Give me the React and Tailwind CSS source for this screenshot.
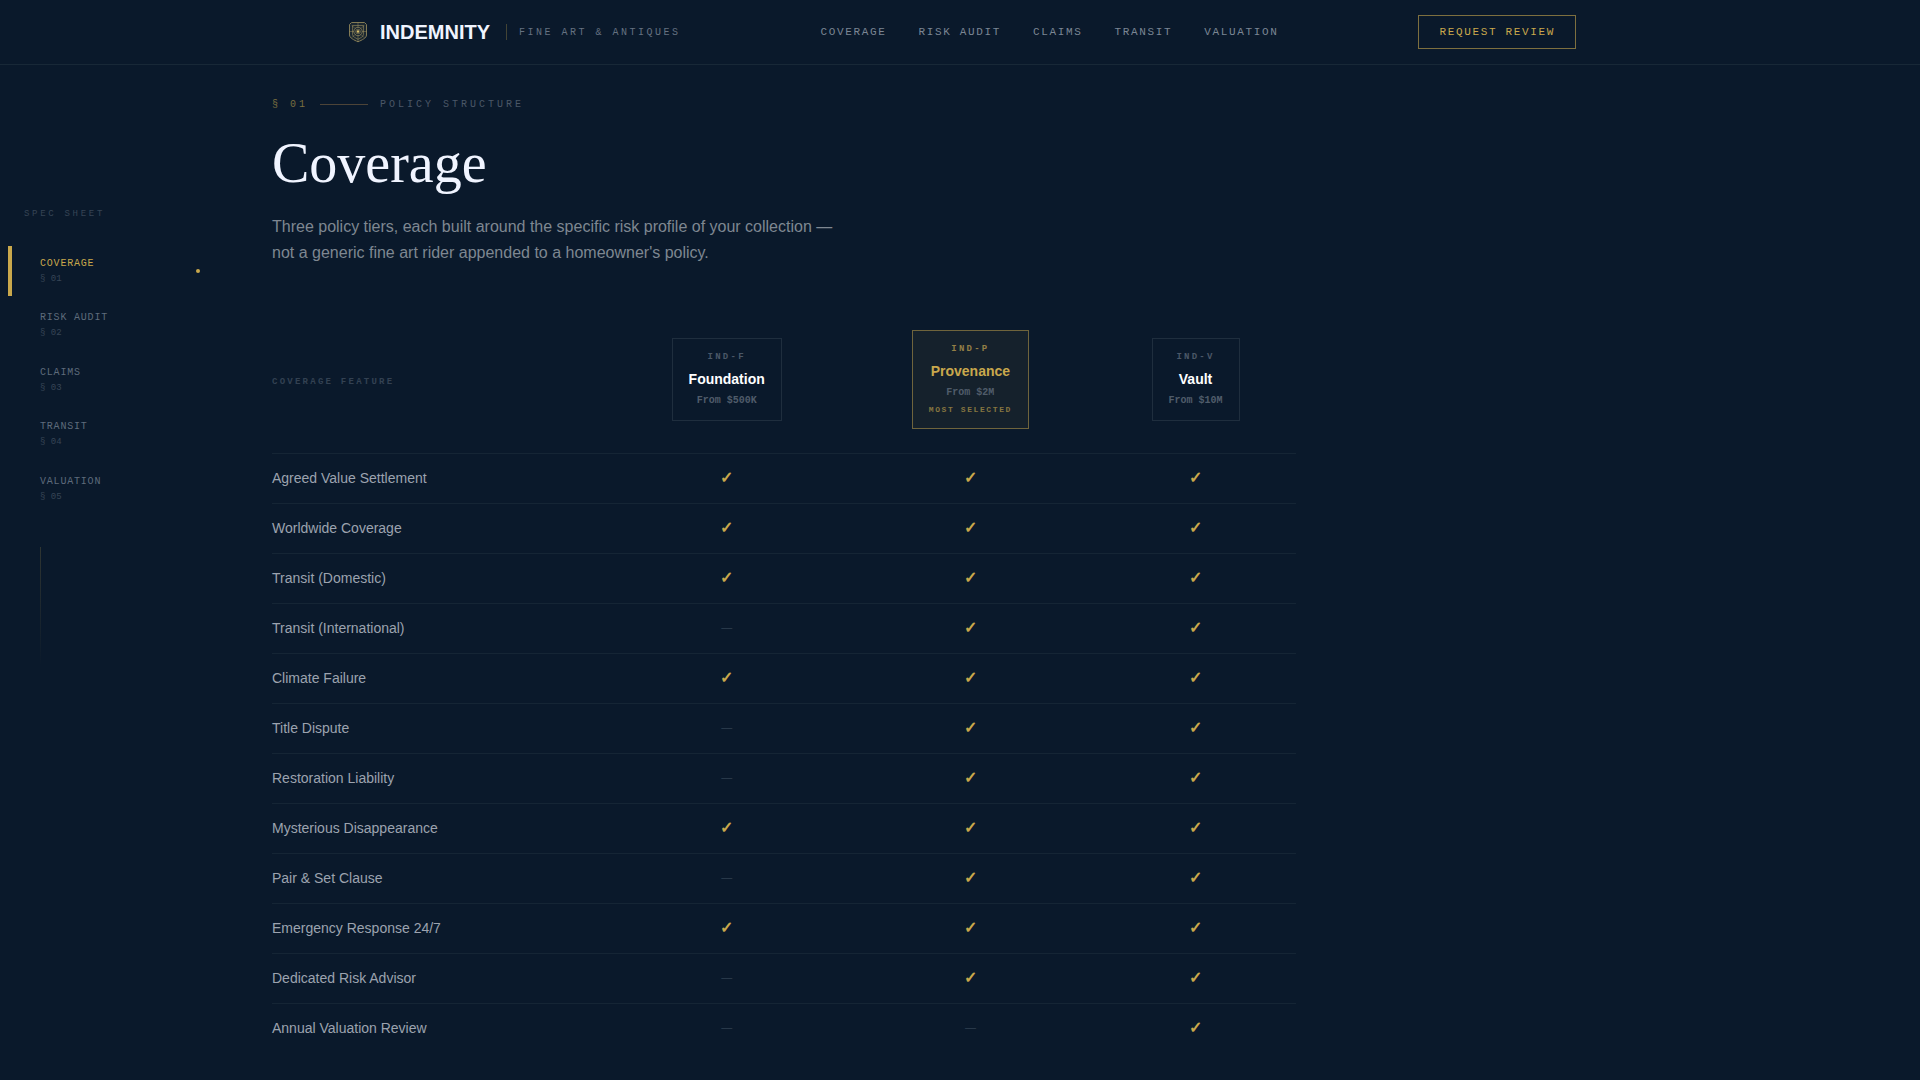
import React from "react";

const MONO = "font-['Liberation_Mono',monospace]";

const SECTIONS = ["Coverage", "Risk Audit", "Claims", "Transit", "Valuation"];

const TIERS = [
  { code: "IND-F", name: "Foundation", from: "From $500K" },
  { code: "IND-P", name: "Provenance", from: "From $2M", featured: true },
  { code: "IND-V", name: "Vault", from: "From $10M" },
];

const FEATURES = [
  ["Agreed Value Settlement", 1, 1, 1],
  ["Worldwide Coverage", 1, 1, 1],
  ["Transit (Domestic)", 1, 1, 1],
  ["Transit (International)", 0, 1, 1],
  ["Climate Failure", 1, 1, 1],
  ["Title Dispute", 0, 1, 1],
  ["Restoration Liability", 0, 1, 1],
  ["Mysterious Disappearance", 1, 1, 1],
  ["Pair & Set Clause", 0, 1, 1],
  ["Emergency Response 24/7", 1, 1, 1],
  ["Dedicated Risk Advisor", 0, 1, 1],
  ["Annual Valuation Review", 0, 0, 1],
];

function Crest() {
  return (
    <svg width="28" height="28" viewBox="0 0 28 28" fill="none" stroke="#b5a468" className="shrink-0">
      <path d="M7.500 4.500 H20.500 L22.500 6.500 V17 C22.500 20 18 22 14 23.800 C10 22 5.500 20 5.500 17 V6.500 Z" strokeWidth="1" opacity="0.7" fill="#b5a468" fillOpacity="0.15" />
      <path d="M8.500 7.500 H19.500 V16.500 C19.500 18.500 16.500 20 14 21.300 C11.500 20 8.500 18.500 8.500 16.500 Z" strokeWidth="0.8" opacity="0.6" />
      <circle cx="14" cy="13.500" r="4.200" strokeWidth="0.8" opacity="0.7" />
      <circle cx="14" cy="13.500" r="2.300" strokeWidth="0.7" opacity="0.7" />
      <path d="M14 4.500 V9.500 M14 17.500 V24 M5.500 13.500 H10 M18 13.500 H22.500 M8 7.500 L11 10.500 M20 7.500 L17 10.500 M8 19.500 L11 16.500 M20 19.500 L17 16.500" strokeWidth="0.7" opacity="0.55" />
      <circle cx="14" cy="13.500" r="1.300" fill="#d8bd68" stroke="none" />
    </svg>
  );
}

function Header() {
  return (
    <header className="h-[65px] border-b border-[#182837]">
      <div className="mx-auto flex h-16 max-w-7xl items-center justify-between px-6">
        <div className="flex items-center">
          <Crest />
          <span className="ml-2 text-[20px] leading-7 font-bold text-[#f0f4ff]">INDEMNITY</span>
          <span className="ml-4 h-4 w-px bg-[#c9a84c]/30" />
          <span className={`${MONO} ml-3 text-[10px] tracking-[0.25em] text-[#657181]`}>FINE ART &amp; ANTIQUES</span>
        </div>
        <nav className={`${MONO} flex gap-8 text-[11px] tracking-[0.15em] text-[#7b8694] uppercase`}>
          {SECTIONS.map((s) => (
            <a key={s}>{s}</a>
          ))}
        </nav>
        <button className={`${MONO} border border-[#c9a84c]/60 px-5 py-2 text-[11px] leading-4 tracking-[0.15em] text-[#c9a84c]`}>
          REQUEST REVIEW
        </button>
      </div>
    </header>
  );
}

function Sidebar() {
  return (
    <aside className={`${MONO} w-[208px] shrink-0 pt-[142px]`}>
      <div className="pl-6 text-[9px] leading-[14px] tracking-[0.3em] text-[#364455]">SPEC SHEET</div>
      <ul className="mt-[25px] ml-2 flex flex-col gap-[4.4px]">
        {SECTIONS.map((s, i) => (
          <li
            key={s}
            className={
              i === 0
                ? "flex h-[50px] items-center justify-between border-l-4 border-[#c9a84c] pr-2 pl-7"
                : "flex h-[50px] items-center justify-between border-l-4 border-transparent pr-2 pl-7"
            }
          >
            <div>
              <div className={i === 0 ? "text-[10px] leading-[15px] tracking-[0.08em] text-[#c9a84c] uppercase" : "text-[10px] leading-[15px] tracking-[0.08em] text-[#5e6b7b] uppercase"}>{s}</div>
              <div className="mt-px text-[9px] leading-[14px] text-[#374556]">§ 0{i + 1}</div>
            </div>
            {i === 0 && <span className="size-1 rounded-full bg-[#c9a84c]" />}
          </li>
        ))}
      </ul>
      <div className="mt-[33px] ml-10 h-[120px] w-px bg-gradient-to-b from-[#c9a84c]/20 to-transparent" />
    </aside>
  );
}

function TierCard({ tier }) {
  const f = tier.featured;
  return (
    <div
      className={
        f
          ? `${MONO} flex h-[99px] flex-col items-center border border-[#c9a84c]/50 bg-[#c9a84c]/[0.06] px-4 pt-[11px] font-bold`
          : `${MONO} flex h-[83px] flex-col items-center border border-[#1f2e3e] px-4 pt-[11px] font-bold`
      }
    >
      <div className={f ? "text-[9px] leading-[14px] tracking-[0.25em] text-[#937f46]" : "text-[9px] leading-[14px] tracking-[0.25em] text-[#4a5767]"}>{tier.code}</div>
      <div className={f ? "mt-[5px] font-['Liberation_Sans',sans-serif] text-sm text-[#c9a84c]" : "mt-[5px] font-['Liberation_Sans',sans-serif] text-sm text-white"}>{tier.name}</div>
      <div className="mt-1 text-[10px] leading-[15px] text-[#505c6a]">{tier.from}</div>
      {f && <div className="mt-1 text-[8px] leading-3 tracking-[0.2em] text-[#857540]">MOST SELECTED</div>}
    </div>
  );
}

const GRID = "grid grid-cols-[335.7px_238px_249.4px_200.9px]";

function CoverageTable() {
  return (
    <div className="mt-[64px] w-[1024px]">
      <div className={`${GRID} h-[123px]`}>
        <div className={`${MONO} mt-[45px] text-[9px] leading-[14px] font-bold tracking-[0.25em] text-[#334152]`}>COVERAGE FEATURE</div>
        {TIERS.map((t) => (
          <div key={t.code} className="flex h-[99px] items-center justify-center">
            <TierCard tier={t} />
          </div>
        ))}
      </div>
      {FEATURES.map(([name, ...marks]) => (
        <div key={name} className={`${GRID} h-[50px] items-center border-t border-[#152535] pb-[2px] text-sm`}>
          <div className="text-[#9ca3af]">{name}</div>
          {marks.map((m, i) =>
            m ? (
              <div key={i} className="pr-[0.4px] text-center text-base leading-6 font-bold text-[#c9a84c]">✓</div>
            ) : (
              <div key={i} className="text-center text-[11px] text-[#304050]">—</div>
            )
          )}
        </div>
      ))}
    </div>
  );
}

export default function App() {
  return (
    <div className="h-[1080px] overflow-hidden bg-[#0a192b] font-['Liberation_Sans',sans-serif]">
      <Header />
      <div className="flex">
        <Sidebar />
        <main className="pt-8 pl-16">
          <div className={`${MONO} flex items-center gap-3 text-[10px] leading-[15px] tracking-[0.3em]`}>
            <span className="text-[#7b6f40]">§ 01</span>
            <span className="h-px w-12 bg-[#4d4438]" />
            <span className="text-[#4a5767]">POLICY STRUCTURE</span>
          </div>
          <h1 className="mt-[23px] font-['Liberation_Serif',serif] text-[56px] leading-[56px] text-[#f0f4ff]">Coverage</h1>
          <p className="mt-[23px] max-w-xl text-base leading-[26px] text-[#7e8791]">
            Three policy tiers, each built around the specific risk profile of your collection — not a generic fine art rider appended to a homeowner's policy.
          </p>
          <CoverageTable />
        </main>
      </div>
    </div>
  );
}
